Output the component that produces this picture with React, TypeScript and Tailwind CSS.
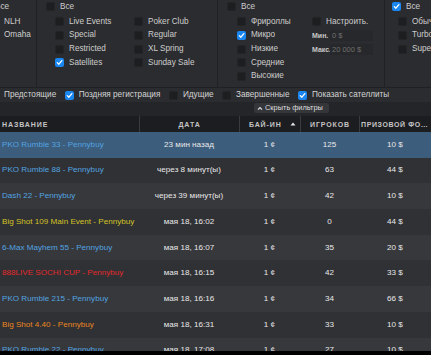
import React from "react";

function Cb({ checked }: { checked?: boolean }) {
  if (checked) {
    return (
      <span className="w-[9px] h-[9px] rounded-[2px] bg-[#1a86f0] flex items-center justify-center shrink-0">
        <svg width="7" height="7" viewBox="0 0 10 10">
          <path d="M1.8 5.2 L4.1 7.4 L8.4 2.4" stroke="white" strokeWidth="1.9" fill="none" strokeLinecap="round" strokeLinejoin="round" />
        </svg>
      </span>
    );
  }
  return <span className="w-[9px] h-[9px] rounded-[2px] bg-[#1d1e20] border border-[#232426] shrink-0" />;
}

function Item({ label, checked }: { label: string; checked?: boolean }) {
  return (
    <div className="h-[13.7px] flex items-center gap-[5px] whitespace-nowrap">
      <Cb checked={checked} />
      <span>{label}</span>
    </div>
  );
}

type Row = { name: string; color: string; date: string; buy: string; players: string; prize: string };

const rows: Row[] = [
  { name: "PKO Rumble 33 - Pennybuy", color: "text-[#52a4e0]", date: "23 мин назад", buy: "1 ¢", players: "125", prize: "10 $" },
  { name: "PKO Rumble 88 - Pennybuy", color: "text-[#52a4e0]", date: "через 8 минут(ы)", buy: "1 ¢", players: "63", prize: "44 $" },
  { name: "Dash 22 - Pennybuy", color: "text-[#52a4e0]", date: "через 39 минут(ы)", buy: "1 ¢", players: "42", prize: "10 $" },
  { name: "Big Shot 109 Main Event - Pennybuy", color: "text-[#d2c224]", date: "мая 18, 16:02", buy: "1 ¢", players: "0", prize: "44 $" },
  { name: "6-Max Mayhem 55 - Pennybuy", color: "text-[#52a4e0]", date: "мая 18, 16:07", buy: "1 ¢", players: "35", prize: "20 $" },
  { name: "888LIVE SOCHI CUP - Pennybuy", color: "text-[#e2292c]", date: "мая 18, 16:15", buy: "1 ¢", players: "42", prize: "33 $" },
  { name: "PKO Rumble 215 - Pennybuy", color: "text-[#52a4e0]", date: "мая 18, 16:16", buy: "1 ¢", players: "34", prize: "66 $" },
  { name: "Big Shot 4.40 - Pennybuy", color: "text-[#e8861f]", date: "мая 18, 16:31", buy: "1 ¢", players: "33", prize: "10 $" },
  { name: "PKO Rumble 22 - Pennybuy", color: "text-[#52a4e0]", date: "мая 18, 17:08", buy: "1 ¢", players: "27", prize: "10 $" },
];

export default function App() {
  return (
    <div className="w-[431px] h-[355px] overflow-hidden bg-black flex flex-col text-[#cdcdcd] font-['Liberation_Sans',Arial,sans-serif] text-[8.2px] leading-none">
      {/* top filter panel */}
      <div className="h-[88px] shrink-0 bg-[#2b2c2f] flex border-b border-[#1f2023]">
        {/* col 1 */}
        <div className="w-[37px] shrink-0 border-r border-[#202124] overflow-hidden">
          <div className="ml-[-28px] w-[100px]">
            <div className="h-[13.7px] flex items-center gap-[5px] pl-[9px] whitespace-nowrap">
              <Cb />
              <span>Все</span>
            </div>
            <div className="mt-[1.3px] pl-[18px]">
              <Item label="NLH" />
              <Item label="Omaha" />
            </div>
          </div>
        </div>
        {/* col 2 */}
        <div className="w-[181px] shrink-0 border-r border-[#202124]">
          <div className="h-[13.7px] flex items-center gap-[5px] pl-[9px]">
            <Cb />
            <span>Все</span>
          </div>
          <div className="mt-[1.3px] flex">
            <div className="w-[97px] pl-[18px]">
              <Item label="Live Events" />
              <Item label="Special" />
              <Item label="Restricted" />
              <Item label="Satellites" checked />
            </div>
            <div>
              <Item label="Poker Club" />
              <Item label="Regular" />
              <Item label="XL Spring" />
              <Item label="Sunday Sale" />
            </div>
          </div>
        </div>
        {/* col 3 */}
        <div className="w-[167px] shrink-0 border-r border-[#202124]">
          <div className="h-[13.7px] flex items-center gap-[5px] pl-[9px]">
            <Cb />
            <span>Все</span>
          </div>
          <div className="mt-[1.3px] flex">
            <div className="w-[94px] pl-[19px]">
              <Item label="Фрироллы" />
              <Item label="Микро" checked />
              <Item label="Низкие" />
              <Item label="Средние" />
              <Item label="Высокие" />
            </div>
            <div>
              <div className="h-[13.7px] flex items-center gap-[5px] whitespace-nowrap">
                <Cb />
                <span>Настроить.</span>
              </div>
              <div className="h-[13.7px] flex items-center whitespace-nowrap">
                <span className="w-[18px] font-bold text-[7px] text-[#c8c8c8]">Мин.</span>
                <span className="w-[43px] h-[11px] bg-[#27282b] flex items-center pl-[2px] text-[#707070] text-[7.5px]">0 $</span>
              </div>
              <div className="h-[15px] flex items-center whitespace-nowrap">
                <span className="w-[18px] font-bold text-[7px] text-[#c8c8c8]">Макс.</span>
                <span className="w-[43px] h-[11px] bg-[#27282b] flex items-center pl-[2px] text-[#707070] text-[7.5px]">20 000 $</span>
              </div>
            </div>
          </div>
        </div>
        {/* col 4 */}
        <div className="flex-1 overflow-hidden">
          <div className="h-[13.7px] flex items-center gap-[5px] pl-[7px]">
            <Cb checked />
            <span>Все</span>
          </div>
          <div className="mt-[1.3px] pl-[13px]">
            <Item label="Обычные" />
            <Item label="Turbo" />
            <Item label="Super Turbo" />
          </div>
        </div>
      </div>

      {/* filter row 2 */}
      <div className="h-[14px] shrink-0 bg-[#2b2c2f] flex items-center gap-[8.5px] ml-[-10px] text-[#d4d4d4] whitespace-nowrap overflow-hidden">
        <Itm2 label="Предстоящие" />
        <Itm2 label="Поздняя регистрация" checked />
        <Itm2 label="Идущие" />
        <Itm2 label="Завершенные" />
        <Itm2 label="Показать сателлиты" checked />
      </div>

      {/* hide filters band */}
      <div className="h-[14px] shrink-0 bg-[#242528] flex items-start">
        <div className="ml-[254px] mt-[1px] h-[10px] w-[75px] bg-[#35363a] rounded-[2px] flex items-center gap-[2px] pl-[3px] text-[7.4px] text-[#dedede] whitespace-nowrap">
          <svg width="6" height="5" viewBox="0 0 6 5">
            <path d="M1 3.6 L3 1.5 L5 3.6" stroke="#e0e0e0" strokeWidth="1.2" fill="none" />
          </svg>
          <span>Скрыть фильтры</span>
        </div>
      </div>

      {/* header */}
      <div className="h-[16px] shrink-0 bg-[#1c1d20] flex items-center text-[7px] font-bold tracking-[0.9px] text-[#c4c4c4] whitespace-nowrap">
        <div className="w-[139px] h-full flex items-center pl-[2px]">НАЗВАНИЕ</div>
        <div className="w-[100px] h-full flex items-center justify-center border-l border-[#3a3b3f]">ДАТА</div>
        <div className="w-[61px] h-full flex items-center pl-[9px] border-l border-[#3a3b3f]">
          <span>БАЙ-ИН</span>
          <svg className="ml-[8px]" width="6" height="4" viewBox="0 0 6 4">
            <path d="M0.5 3.5 L3 0.6 L5.5 3.5 Z" fill="#e6e6e6" />
          </svg>
        </div>
        <div className="w-[59px] h-full flex items-center justify-center border-l border-[#3a3b3f]">ИГРОКОВ</div>
        <div className="w-[72px] h-full flex items-center border-l border-[#3a3b3f] pl-[1px] overflow-hidden tracking-[0.6px]">
          <span className="truncate">ПРИЗОВОЙ ФОНД</span>
        </div>
      </div>

      {/* rows */}
      <div className="h-[219px] shrink-0 overflow-hidden">
        {rows.map((r, i) => (
          <div
            key={i}
            className={
              "h-[25.7px] flex items-center whitespace-nowrap text-[8.1px] " +
              (i === 0 ? "bg-[#3d5d7d]" : i % 2 === 1 ? "bg-[#303135]" : "bg-[#37383c]")
            }
          >
            <div className={"w-[139px] pl-[2px] overflow-hidden " + r.color}>{r.name}</div>
            <div className="w-[100px] text-center text-[#e8e8e8]">{r.date}</div>
            <div className="w-[61px] text-center text-[#e8e8e8]">{r.buy}</div>
            <div className="w-[59px] text-center text-[#e8e8e8]">{r.players}</div>
            <div className="w-[72px] text-center text-[#e8e8e8]">{r.prize}</div>
          </div>
        ))}
      </div>
    </div>
  );
}

function Itm2({ label, checked }: { label: string; checked?: boolean }) {
  return (
    <div className="flex items-center gap-[5px] shrink-0">
      <Cb checked={checked} />
      <span>{label}</span>
    </div>
  );
}
